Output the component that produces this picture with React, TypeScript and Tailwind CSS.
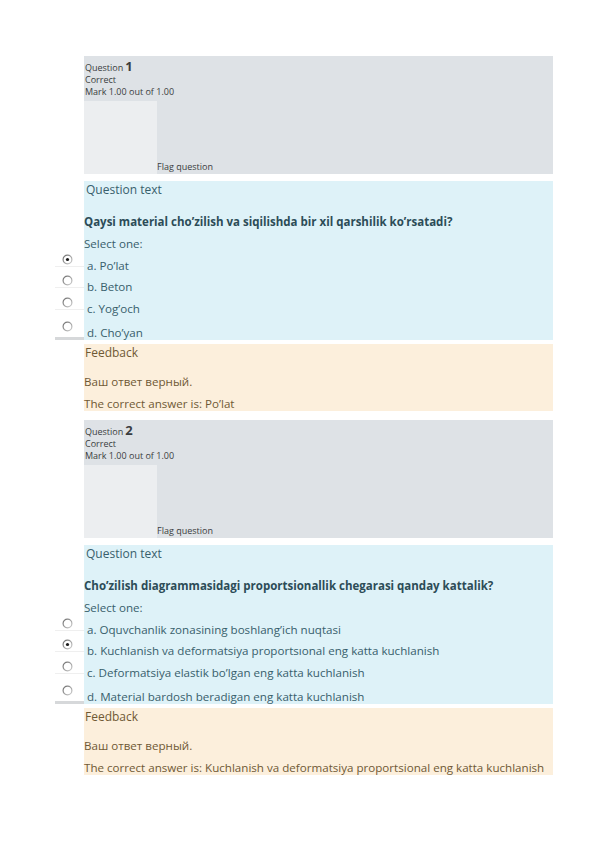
import React from "react";

type Q = {
  num: number;
  text: string;
  options: string[];
  selected: number;
  answer: string;
};

const questions: Q[] = [
  {
    num: 1,
    text: "Qaysi material cho’zilish va siqilishda bir xil qarshilik ko’rsatadi?",
    options: ["a. Po’lat", "b. Beton", "c. Yog’och", "d. Cho’yan"],
    selected: 0,
    answer: "Po’lat",
  },
  {
    num: 2,
    text: "Cho’zilish diagrammasidagi proportsionallik chegarasi qanday kattalik?",
    options: [
      "a. Oquvchanlik zonasining boshlang’ich nuqtasi",
      "b. Kuchlanish va deformatsiya proportsıonal eng katta kuchlanish",
      "c. Deformatsiya elastik bo’lgan eng katta kuchlanish",
      "d. Material bardosh beradigan eng katta kuchlanish",
    ],
    selected: 1,
    answer: "Kuchlanish va deformatsiya proportsional eng katta kuchlanish",
  },
];

function Radio({ checked }: { checked: boolean }) {
  return (
    <svg width="11" height="11" viewBox="0 0 11 11">
      <defs>
        <linearGradient id="rg" x1="0" y1="0" x2="1" y2="1">
          <stop offset="0" stopColor="#6a6a6a" />
          <stop offset="1" stopColor="#d0d0d0" />
        </linearGradient>
      </defs>
      <circle cx="5.5" cy="5.5" r="4.4" fill="#ffffff" stroke="url(#rg)" strokeWidth="1.2" />
      {checked && <circle cx="5.5" cy="5.5" r="1.6" fill="#1a1a1a" />}
    </svg>
  );
}

const rowHeights = [21, 22, 24, 19];

function Question({ q }: { q: Q }) {
  return (
    <div className="flex flex-col">
      {/* info */}
      <div className="bg-[#dee2e6] h-[118px] flex flex-col text-[#3a3d40]">
        <div className="pt-[3px] pl-[1px] text-[9px] leading-[12px]">
          <div className="h-[15px] flex items-end">
            <span className="leading-[12px]">Question</span>
            <span className="ml-[2px] text-[13px] font-bold leading-[15px]">{q.num}</span>
          </div>
          <div className="h-[12px]">Correct</div>
          <div className="h-[12px]">Mark 1.00 out of 1.00</div>
        </div>
        <div className="mt-[3px] flex flex-1 items-end">
          <div className="w-[73px] h-[73px] bg-[#eceef0]" />
          <div className="text-[9px] leading-[12px] pb-[1px]">Flag question</div>
        </div>
      </div>

      {/* formulation */}
      <div className="mt-[7px] bg-[#def2f8] text-[#38606c] h-[159px] flex flex-col">
        <div className="pl-[2px] text-[12px] leading-[18px]">Question text</div>
        <div className="mt-[15px] text-[11.5px] leading-[16px] font-bold text-[#2c4c57]">{q.text}</div>
        <div className="mt-[6px] text-[11.6px] leading-[16px]">Select one:</div>
        <div className="mt-[2px] flex flex-col">
          {q.options.map((o, i) => (
            <div key={i} className="flex" style={{ height: rowHeights[i] }}>
              <div className="-ml-[29px] w-[29px] flex flex-col items-center">
                <div className="pl-[1px] pr-[6px]">
                  <Radio checked={i === q.selected} />
                </div>
                <div
                  className={
                    i === 3
                      ? "mt-auto w-full h-[3px] bg-[#d6d8da]"
                      : "mt-[1px] w-full h-[1px] bg-[#efefef]"
                  }
                />
              </div>
              <div className="pl-[3px] pt-[4px] text-[11.6px] leading-[16px] whitespace-nowrap">{o}</div>
            </div>
          ))}
        </div>
      </div>

      {/* feedback */}
      <div className="mt-[4px] bg-[#fcefdc] text-[#6f5935] h-[67px] flex flex-col">
        <div className="pl-[1px] text-[12px] leading-[18px]">Feedback</div>
        <div className="mt-[12px] text-[11.6px] leading-[16px]">Ваш ответ верный.</div>
        <div className="mt-[6px] text-[11.6px] leading-[15px] whitespace-nowrap">The correct answer is: {q.answer}</div>
      </div>
    </div>
  );
}

export default function App() {
  return (
    <div
      className="w-[596px] min-h-[842px] bg-white pt-[56px] pl-[84px] pr-[43px]"
      style={{ fontFamily: '"Open Sans", "Noto Sans", sans-serif' }}
    >
      <div className="flex flex-col gap-[9px]">
        {questions.map((q) => (
          <Question key={q.num} q={q} />
        ))}
      </div>
    </div>
  );
}
